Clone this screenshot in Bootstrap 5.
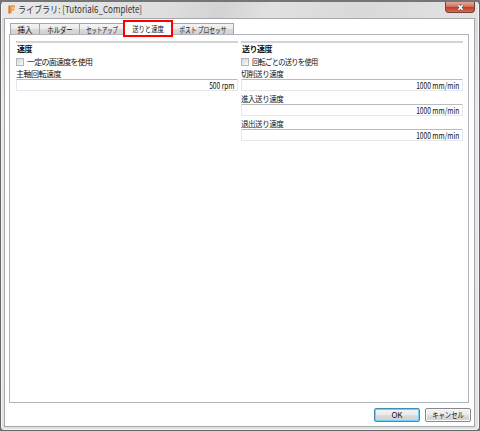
<!DOCTYPE html>
<html lang="ja">
<head>
<meta charset="utf-8">
<title>ライブラリ</title>
<link href="https://cdn.jsdelivr.net/npm/bootstrap@5.3.0/dist/css/bootstrap.min.css" rel="stylesheet">
<style>
body{margin:0;background:#777;font-family:"Noto Sans CJK JP",sans-serif;font-size:8px;line-height:12px;color:#111;overflow:hidden}
.win{width:480px;height:431px;border:1px solid #666;border-top:2px solid #747576;border-radius:5px 5px 4px 4px;background:linear-gradient(#d9d9d9,#e9e9e9 100px,#e2e2e2);padding:0 4px 4px 3px;box-shadow:inset 1px 0 #f5f5f5,inset -1px -1px #f5f5f5}
.titlebar{height:16px;padding-left:4px;background:linear-gradient(115deg,#e9e9e9 0,#dedede 35%,#d3d3d3 46%,#e1e1e1 56%,#d9d9d9 75%,#e3e3e3 100%);margin:0 -3px 0 -2px;color:#333}
.logo{width:7px;height:9px;margin:3px 0 0 2px}
.caption{font-size:9.5px;line-height:14px;margin-left:3px;white-space:nowrap;transform:scaleX(.845);transform-origin:left}
.closer{width:30px;height:11px;margin-right:3px;border:1px solid #70433f;border-top:0;border-radius:0 0 4px 4px;background:linear-gradient(#e5a79b,#d27362 45%,#c03a20 50%,#d9694b)}
.client{height:409px;background:#fff;border:1px solid #a5a8ac;padding:4px 5px 3px 4px}
.tabs{height:11px;padding-left:1px}
.tab{height:11px;line-height:11px;border:1px solid #a2a5aa;border-bottom:0;border-right-width:0;background:linear-gradient(#f3f3f3,#ebebeb 50%,#dadada 51%,#d2d2d2);display:flex;justify-content:center;white-space:nowrap}
.tab.final{border-right-width:1px}
.tab.sel{height:17px;margin:-3px -1px -4px -1px;border:2px solid #f00;background:#fff;line-height:13px;position:relative;z-index:2;width:50px}
.sq{display:inline-block;white-space:nowrap}
.s94{transform:scaleX(.94)}
.s80{transform:scaleX(.79)}
.s72{transform:scaleX(.72)}
.s65{transform:scaleX(.66)}
.panel{height:369px;border:1px solid #b0b3ba;padding:6px 5px 0 6px;gap:3px}
.group{border-top:2px solid #d3d3d3}
.head{font-weight:700;height:12px;line-height:12px;letter-spacing:-.5px;padding-left:1px}
.chk{width:8px;height:8px;border:1px solid #b4b6b9;background:linear-gradient(135deg,#d4d7da,#fafafa);flex:none;margin-right:3px}
.row-check{height:13px;line-height:13px;letter-spacing:-.75px}
.group .row-check .sq,.lab .sq{transform-origin:left}
.tight{transform:scaleX(.905)}
.lab{height:11px;line-height:12px;letter-spacing:-.5px}
.lab .sq{transform:scaleX(.94)}
.lab .sq.full{transform:none}
.val{height:12px;line-height:10px;font-size:8.5px;border:1px solid #e3e7ee;border-top-color:#b9bbc0;text-align:right;padding-right:3px;border-radius:1px;margin-bottom:2px}
.val .sq{transform:scaleX(.78);transform-origin:right}
.actions{padding-top:5px;gap:5px;margin-right:-2px}
.action{height:14px;width:46px;border:1px solid #888;border-radius:2px;background:linear-gradient(#f3f3f3,#ebebeb 49%,#dddddd 50%,#cfcfcf);line-height:12px;display:flex;justify-content:center;box-shadow:inset 0 0 0 1px #fafafa;white-space:nowrap}
.action.default{border-color:#3c8fb6;box-shadow:inset 0 0 0 1px #6bd3f5}
</style>
</head>
<body>
<div class="win">
  <div class="titlebar d-flex align-items-start">
    <svg class="logo" viewBox="0 0 8 10"><path d="M1 0h7v2.6H4.2v1.3h3v2.3h-3V9L1 10z" fill="#f19a48"/><path d="M.5 0l2 2v6l-2 2z" fill="#d9772a"/></svg>
    <div class="caption">ライブラリ: [Tutorial6_Complete]</div>
    <div class="closer ms-auto d-flex justify-content-center align-items-center"><svg width="9" height="7" viewBox="0 0 9 7"><path d="M2.5 1.2l4 4.6M6.5 1.2L2.5 5.8" stroke="#57606f" stroke-width="3.2"/><path d="M2.5 1.2l4 4.6M6.5 1.2L2.5 5.8" stroke="#fff" stroke-width="1.6"/></svg></div>
  </div>
  <div class="client d-flex flex-column">
    <div class="tabs d-flex">
      <div class="tab" style="width:29px"><span class="sq s94">挿入</span></div>
      <div class="tab" style="width:40px"><span class="sq s80">ホルダー</span></div>
      <div class="tab" style="width:45px"><span class="sq s65">セットアップ</span></div>
      <div class="tab sel"><span class="sq s80">送りと速度</span></div>
      <div class="tab final" style="width:62px"><span class="sq s72">ポスト プロセッサ</span></div>
    </div>
    <div class="panel d-flex">
      <div class="group" style="width:222px">
        <div class="head">速度</div>
        <div class="row-check d-flex align-items-center"><span class="chk"></span><span class="sq">一定の面速度を使用</span></div>
        <div class="lab"><span class="sq full">主軸回転速度</span></div>
        <div class="val"><span class="sq">500 rpm</span></div>
      </div>
      <div class="group flex-fill">
        <div class="head">送り速度</div>
        <div class="row-check d-flex align-items-center"><span class="chk"></span><span class="sq tight">回転ごとの送りを使用</span></div>
        <div class="lab"><span class="sq">切削送り速度</span></div>
        <div class="val"><span class="sq">1000 mm/min</span></div>
        <div class="lab"><span class="sq">進入送り速度</span></div>
        <div class="val"><span class="sq">1000 mm/min</span></div>
        <div class="lab"><span class="sq">退出送り速度</span></div>
        <div class="val"><span class="sq">1000 mm/min</span></div>
      </div>
    </div>
    <div class="actions d-flex justify-content-end">
      <div class="action default"><span>OK</span></div>
      <div class="action"><span class="sq s80">キャンセル</span></div>
    </div>
  </div>
</div>
<script src="https://cdn.jsdelivr.net/npm/bootstrap@5.3.0/dist/js/bootstrap.bundle.min.js"></script>
</body>
</html>
